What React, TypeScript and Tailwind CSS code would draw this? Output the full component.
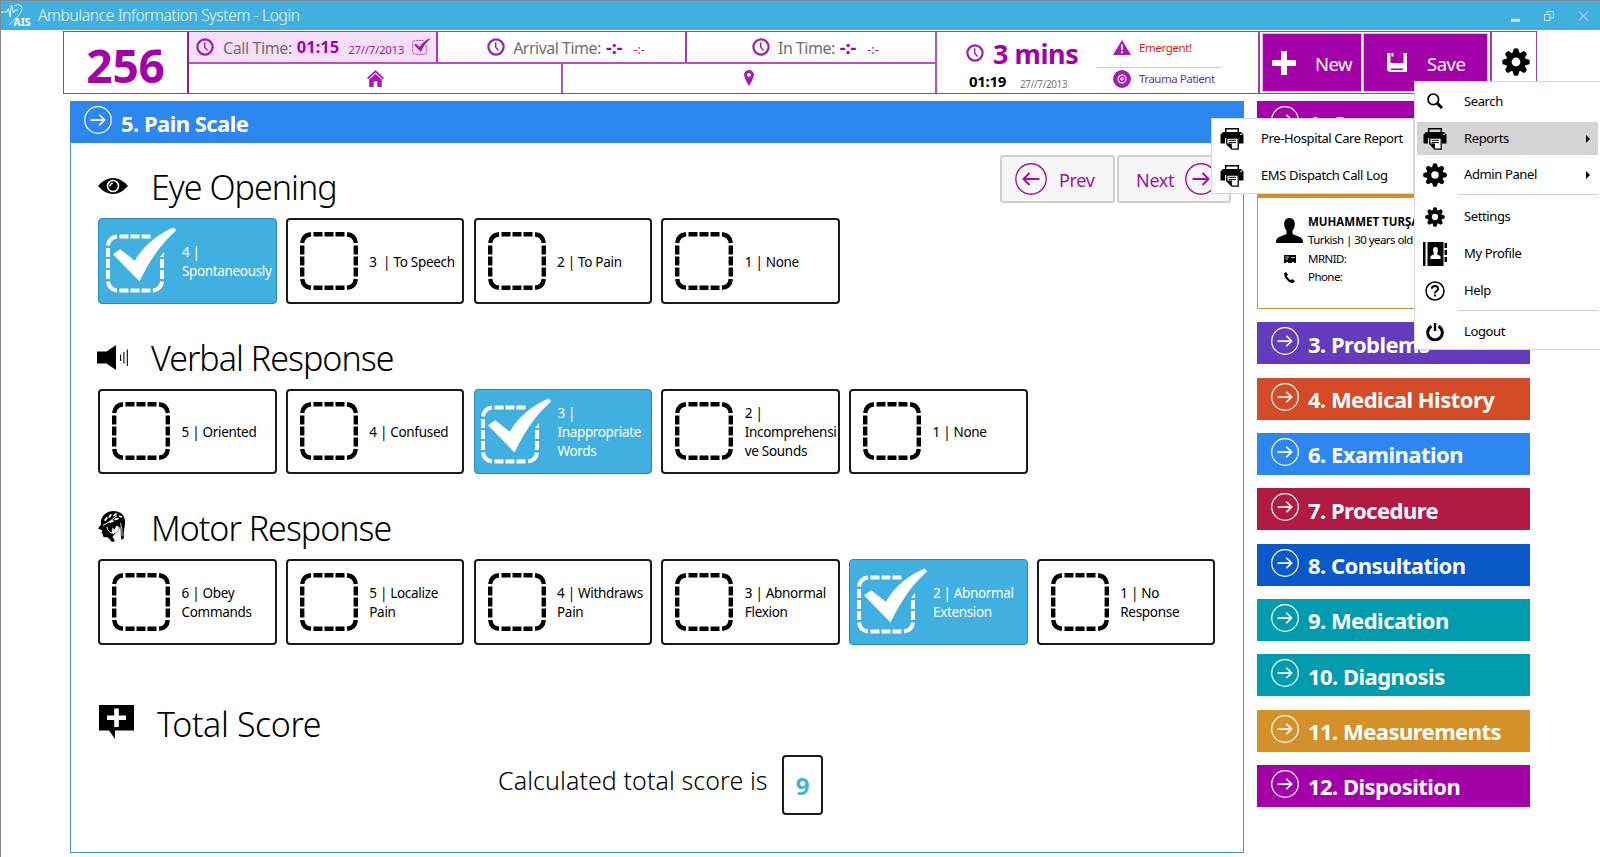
import React from "react";

const SECTION_COLORS = {
  purple: "bg-[#a400aa]",
  violet: "bg-[#633cbd]",
  orange: "bg-[#d44b27]",
  blue: "bg-[#2d87ef]",
  crimson: "bg-[#b11a41]",
  navy: "bg-[#0a59c9]",
  teal: "bg-[#009bad]",
  amber: "bg-[#d49129]",
};

type IconProps = { className?: string };

function ArrowCircle({ className = "", left = false }: IconProps & { left?: boolean }) {
  return (
    <svg viewBox="0 0 32 32" className={className} fill="none" stroke="currentColor">
      <circle cx="16" cy="16" r="15.2" strokeWidth="1.4" />
      <path
        strokeWidth="2"
        d={left ? "M24.5 16H8.5M14.5 10L8.5 16L14.5 22" : "M7.5 16H23.5M17.5 10L23.5 16L17.5 22"}
      />
    </svg>
  );
}

function Clock({ className = "" }: IconProps) {
  return (
    <svg viewBox="0 0 18 18" className={className} fill="none" stroke="currentColor">
      <circle cx="9" cy="9" r="7.6" strokeWidth="2.2" />
      <path d="M8.7 4.2V9.3L11.6 12.4" strokeWidth="1.4" />
    </svg>
  );
}

function Gear({ className = "" }: IconProps) {
  return (
    <svg viewBox="-14 -14 28 28" className={className} fill="currentColor">
      <path
        fillRule="evenodd"
        d="M0-10A10 10 0 1 1 0 10A10 10 0 1 1 0-10ZM0-4.4A4.4 4.4 0 1 0 0 4.4A4.4 4.4 0 1 0 0-4.4Z"
      />
      {[0, 45, 90, 135, 180, 225, 270, 315].map((a) => (
        <path key={a} transform={`rotate(${a})`} d="M-3.4-9L-2.2-13.2Q0-14.4 2.2-13.2L3.4-9Z" />
      ))}
    </svg>
  );
}

function Printer({ className = "" }: IconProps) {
  return (
    <svg viewBox="0 0 24 22" className={className}>
      <path d="M5.7 4.5V.8H18.3V4.5" fill="none" stroke="#000" strokeWidth="1.5" />
      <path d="M3 4H21L23.5 6.5V15.5H19V10H5V15.5H0.5V6.5Z" fill="#000" />
      <rect x="20.3" y="5.6" width="1.6" height="1.3" fill="#fff" />
      <path d="M6.8 10H18.2V21.2H12L6.8 16Z" fill="#fff" stroke="#000" strokeWidth="1.3" />
      <path d="M6.5 15.5H11.8V21.2Z" fill="#000" />
      <path d="M8.6 12.3H16M8.6 14.6H16" stroke="#000" strokeWidth="1" />
    </svg>
  );
}

function Eye() {
  return (
    <svg viewBox="0 0 30 16" className="mb-[2px] h-4 w-[30px]">
      <path d="M0 8Q7 0 15 0T30 8Q23 16 15 16T0 8Z" fill="#000" />
      <circle cx="15" cy="8" r="6.3" fill="#fff" />
      <circle cx="15" cy="8" r="4.7" fill="#000" />
      <path d="M12 8.500A3 3 0 0 1 14.800 5.200" fill="none" stroke="#fff" strokeWidth="1.400" />
    </svg>
  );
}

function Speaker() {
  return (
    <svg viewBox="0 0 31 25" className="-ml-px mb-px h-[25px] w-[31px]">
      <path d="M0 6.5H9.5L19 0V25L9.5 18.5H0Z" fill="#000" />
      <path d="M23.6 9.5V16M26.9 7V18.5M30.3 4.5V21" stroke="#000" strokeWidth="1.1" />
    </svg>
  );
}

function Head() {
  return (
    <svg viewBox="0 0 28 31" className="mb-[3px] h-[31px] w-7">
      <path
        d="M3 9C5 3 10 0 15.5 0C22 0 26.5 3.500 27 10C27.300 16 25 20 26 27L23.500 29C22 24 23.500 19 22 15C21 20 19 22 17 22.500L14.500 26L17 30L14 31L10 26.500L5.500 26L4.500 23L3.500 21.500L4.500 19.500L0 17.500L3 13.500Z"
        fill="#000"
      />
      <g fill="#fff">
        <ellipse cx="8" cy="8" rx="2.300" ry="1" transform="rotate(-48 8 8)" />
        <ellipse cx="12" cy="5" rx="2.300" ry="1" transform="rotate(-55 12 5)" />
        <ellipse cx="17" cy="3.800" rx="2.300" ry="1" transform="rotate(-40 17 3.800)" />
        <ellipse cx="13.500" cy="10.500" rx="2.500" ry="1" transform="rotate(-18 13.500 10.500)" />
        <ellipse cx="18.500" cy="8" rx="2.500" ry="1" transform="rotate(-15 18.500 8)" />
        <ellipse cx="22.500" cy="5.500" rx="2" ry=".9" transform="rotate(20 22.500 5.500)" />
      </g>
      <path d="M5 14.500Q12 11 19 4.500M9 16Q10 22 16 22.500" fill="none" stroke="#fff" strokeWidth="1" />
      <path d="M13.500 22L14.500 16.500L16.500 18.500L18.500 14.500L21 16Q21 20 17.500 22Z" fill="#fff" />
      <path d="M22.500 12Q24.500 18 24 25" fill="none" stroke="#fff" strokeWidth=".8" />
    </svg>
  );
}

function ScoreBubble() {
  return (
    <svg viewBox="0 0 35 34" className="mb-[3px] ml-px h-[34px] w-[35px]">
      <path d="M0 0H35V25.500H16V34L10 25.500H0Z" fill="#000" />
      <path d="M8 12.700H27M17.500 3.500V22" stroke="#fff" strokeWidth="4.600" />
    </svg>
  );
}

function EmptyBox() {
  return (
    <svg viewBox="0 0 58 58" className="size-[58px]" fill="none" stroke="currentColor" strokeWidth="4.400">
      <path d="M2.200 11Q3 3 11 2.200M47 2.200Q55 3 55.800 11M55.800 47Q55 55 47 55.800M11 55.800Q3 55 2.200 47" />
      <path d="M13.500 2.200h9M24.500 2.200h9M35.500 2.200h9M13.500 55.800h9M24.500 55.800h9M35.500 55.800h9" />
      <path d="M2.200 13.500v9M2.200 24.500v9M2.200 35.500v9M55.800 13.500v9M55.800 24.500v9M55.800 35.500v9" />
    </svg>
  );
}

function CheckedBox({ className = "" }: IconProps) {
  return (
    <svg viewBox="0 0 72 66" className={className} fill="none" stroke="currentColor" strokeWidth="4">
      <g transform="translate(0 7.500)">
        <path d="M2 11Q3 3 11 2M56 47Q55 55 47 56M11 56Q3 55 2 47" />
        <path d="M13.500 2h9M24.500 2h9M35.500 2h9M13.500 56h9M24.500 56h9M35.500 56h9" />
        <path d="M2 13.500v9M2 24.500v9M2 35.500v9M56 24.500v9M56 35.500v9" />
        <path d="M54 22.500L58 17.500V22.500Z" fill="currentColor" stroke="none" />
      </g>
      <path
        d="M7 27.200L14.300 22.200L28.800 33.800C38 18 52 7 67.500 .5L70.300 3.200C55 17 45 31 33.500 54.500Z"
        fill="currentColor"
        stroke="none"
      />
    </svg>
  );
}

function Logo() {
  return (
    <svg viewBox="0 0 30 26" className="h-[26px] w-[30px]">
      <path
        d="M0 9H6L7.500 5L9 14L10.500 2L12.500 10L14 7H17M13 3Q17 0 20.500 3Q22 8 17 13L8 22"
        fill="none"
        stroke="#d9f2fb"
        strokeWidth="1"
      />
      <text x="12.500" y="22.500" fontSize="10.500" fontWeight="700" fill="#fff" fontFamily="Noto Sans, sans-serif" textLength="17">
        AIS
      </text>
    </svg>
  );
}

type Option = { label: string; checked?: boolean };

function OptionCard({ label, checked }: Option) {
  return (
    <div
      className={
        checked
          ? "flex h-[85.500px] w-[178.500px] items-center rounded-[4px] border border-[#1e8bb8] bg-[#41b0e1] pl-[6.500px] text-white"
          : "flex h-[85.500px] w-[178.500px] items-center rounded-[4px] border-2 border-[#1a1a1a] bg-white pl-[12px] text-black"
      }
    >
      {checked ? <CheckedBox className="mb-px h-[66px] w-[72px] shrink-0" /> : <span className="shrink-0"><EmptyBox /></span>}
      <span
        className={
          checked
            ? "ml-[4.500px] w-[96px] pt-[3px] text-[13.500px] leading-[19px] tracking-[-0.350px] break-words"
            : "ml-[11.500px] w-[93px] pt-[3px] text-[13.500px] leading-[19px] tracking-[-0.300px] whitespace-pre-wrap"
        }
      >
        {label}
      </span>
    </div>
  );
}

function Group({ icon, title, options, first }: { icon: React.ReactNode; title: string; options: Option[]; first?: boolean }) {
  return (
    <section>
      <div className={first ? "flex h-[75px] items-end justify-between" : "flex h-[85px] items-end"}>
        <div className="mb-[11px] flex h-10 items-center">
          <span className="flex w-[53px] items-center">{icon}</span>
          <h2 className="text-[34px] leading-[40px] font-light tracking-[-0.980px]">{title}</h2>
        </div>
        {first && (
          <div className="mr-[12px] mb-[15px] flex gap-[2px] text-[18px] text-[#a010a8]">
            <button className="flex h-[48px] w-[115px] items-center gap-[12px] rounded-[3px] border-2 border-[#d0d0d0] bg-[#f6f6f6] pl-[13px]">
              <ArrowCircle left className="size-8" />
              <span className="pt-[3px] tracking-[-0.300px]">Prev</span>
            </button>
            <button className="flex h-[48px] w-[114px] items-center gap-[11px] rounded-[3px] border-2 border-[#d0d0d0] bg-[#f6f6f6] pl-[17px]">
              <span className="pt-[3px] tracking-[-0.300px]">Next</span>
              <ArrowCircle className="size-8" />
            </button>
          </div>
        )}
      </div>
      <div className="flex gap-[9.250px]">
        {options.map((o) => (
          <OptionCard key={o.label} {...o} />
        ))}
      </div>
    </section>
  );
}

function Bar({ color, title }: { color: string; title: string }) {
  return (
    <div className={`flex h-[42px] items-center pl-[14px] text-white ${color}`}>
      <ArrowCircle className="mb-[4px] size-7" />
      <span className="ml-[9px] pt-px text-[22px] leading-[30px] font-bold tracking-[-0.530px] whitespace-nowrap">{title}</span>
    </div>
  );
}

function TimeCell({ label, active }: { label: string; active?: boolean }) {
  return (
    <div
      className={
        active
          ? "flex w-[250px] items-center border-r-2 border-[#a53aad] bg-[#f7dff9] pl-[7px] text-[#a020ae]"
          : "flex w-[249px] items-center justify-center border-r-2 border-[#a53aad] pl-[9px] text-[#a020ae] last:border-r-0"
      }
    >
      <Clock className="size-[18px]" />
      <span className={active ? "ml-[9px] pt-px text-[16px] tracking-[-0.400px] text-[#6f6f6f]" : "ml-[8px] pt-px text-[16px] tracking-[-0.500px] text-[#6f6f6f]"}>
        {label}
      </span>
      {active ? (
        <b className="ml-[5px] pt-px text-[16.500px] text-[#a400aa]">01:15</b>
      ) : (
        <b className="ml-[5px] pt-px text-[18px] text-[#a400aa]">-:-</b>
      )}
      <span className={active ? "ml-[9px] pt-[6px] text-[11.500px] tracking-[-0.300px]" : "ml-[11px] pt-[6px] text-[12.500px]"}>
        {active ? "27//7/2013" : "-:-"}
      </span>
      {active && <CheckedBox className="mb-px ml-[8px] h-[17px] w-[19px] [stroke-width:3]" />}
    </div>
  );
}

function MenuItem({ icon, label, arrow, active, tall }: { icon: React.ReactNode; label: string; arrow?: boolean; active?: boolean; tall?: boolean }) {
  return (
    <div className={`flex items-center pl-[6px] ${tall ? "h-[37px]" : "h-[33px]"} ${active ? "bg-[#d5d3d4]" : ""}`}>
      <span className="flex w-6 justify-center">{icon}</span>
      <span className="ml-[17px] pt-px text-[13px] tracking-[-0.380px] whitespace-nowrap">{label}</span>
      {arrow && <span className="mr-[8px] ml-auto border-y-[4px] border-l-[4px] border-y-transparent border-l-black" />}
    </div>
  );
}

const EYE: Option[] = [
  { label: "4 | Spontaneously", checked: true },
  { label: "3  | To Speech" },
  { label: "2 | To Pain" },
  { label: "1 | None" },
];
const VERBAL: Option[] = [
  { label: "5 | Oriented" },
  { label: "4 | Confused" },
  { label: "3 | Inappropriate Words", checked: true },
  { label: "2 | Incomprehensi\nve Sounds" },
  { label: "1 | None" },
];
const MOTOR: Option[] = [
  { label: "6 | Obey Commands" },
  { label: "5 | Localize Pain" },
  { label: "4 | Withdraws Pain" },
  { label: "3 | Abnormal Flexion" },
  { label: "2 | Abnormal Extension", checked: true },
  { label: "1 | No Response" },
];

export default function App() {
  return (
    <div className="relative h-[857px] w-[1600px] overflow-hidden border-t border-l border-[#7d8a90] bg-white font-['Noto_Sans','Open_Sans',sans-serif] text-black">
      <div className="flex h-[29px] items-center bg-[#41b0e1] text-[#eefaff]">
        <Logo />
        <span className="ml-[7px] text-[15.500px] font-light tracking-[-0.330px]">Ambulance Information System - Login</span>
        <svg viewBox="0 0 78 14" className="mr-[11px] ml-auto h-[14px] w-[78px]" fill="none" stroke="#c5e8f6">
          <path d="M0 11.200h9" strokeWidth="3" />
          <path d="M33.500 5.500h5.500v6h-5.500zM36 5V2.500h6.500V9H39.500" />
          <path d="M68 2.500l9 9M77 2.500l-9 9" />
        </svg>
      </div>

      <header className="mt-px ml-[62px] flex h-[63px] w-[1474px] border border-[#a53aad]">
        <div className="flex w-[125px] items-center justify-center border-r-2 border-[#8f1f97] pt-[5px] text-[46px] leading-none font-bold tracking-[-0.200px] text-[#a400aa]">256</div>
        <div className="flex w-[748px] flex-col border-r-2 border-[#b552bc]">
          <div className="flex h-[32px] border-b-2 border-[#b552bc]">
            <TimeCell label="Call Time:" active />
            <TimeCell label="Arrival Time:" />
            <TimeCell label="In Time:" />
          </div>
          <div className="flex flex-1 text-[#a41bb8]">
            <div className="flex w-[374px] items-center justify-center border-r-2 border-[#b552bc]">
              <svg viewBox="0 0 17 17" className="size-[17px]" fill="currentColor">
                <path d="M8.500 0L17 8L15.800 9.300L8.500 2.600L1.200 9.300L0 8Z" />
                <path d="M8.500 3.700L14.800 9.400V17H10.300V11.500H6.700V17H2.200V9.400Z" />
              </svg>
            </div>
            <div className="flex flex-1 items-center justify-center pb-px">
              <svg viewBox="0 0 10 16" className="h-4 w-[10px]" fill="currentColor">
                <path fillRule="evenodd" d="M5 0A5 5 0 0 1 10 5Q9.500 8.500 5 16Q.5 8.500 0 5A5 5 0 0 1 5 0ZM5 3A1.900 1.900 0 1 0 5 6.800A1.900 1.900 0 1 0 5 3Z" />
              </svg>
            </div>
          </div>
        </div>
        <div className="flex w-[323px] border-r-2 border-[#a53aad] pl-[29px] text-[#a41bb8]">
          <div className="w-[131px]">
            <div className="flex h-[41px] items-center">
              <Clock className="size-[18px]" />
              <b className="ml-[9px] pt-[2px] text-[27px] leading-none tracking-[-0.450px] whitespace-nowrap text-[#a400aa]">3 mins</b>
            </div>
            <div className="flex h-[16px] items-center pl-[3px]">
              <b className="text-[15px] leading-none tracking-[-0.300px] text-black">01:19</b>
              <span className="ml-[14px] pt-[5px] text-[10px] leading-none tracking-[-0.400px] text-[#777]">27//7/2013</span>
            </div>
          </div>
          <div className="w-[124px] text-[12px]">
            <div className="flex h-[36px] items-center border-b border-[#ccc] pl-[16px]">
              <svg viewBox="0 0 18 15" className="mb-[4px] h-[15px] w-[18px]">
                <path d="M9 0L18 15H0Z" fill="currentColor" />
                <path d="M9 4.500V10M9 11.300V13.300" stroke="#fff" strokeWidth="1.800" />
              </svg>
              <span className="ml-[8px] pb-[3px] text-[11.500px] tracking-[-0.400px] text-[#e01515]">Emergent!</span>
            </div>
            <div className="flex h-[21px] items-center pl-[16px]">
              <svg viewBox="0 0 18 18" className="size-[18px]">
                <circle cx="9" cy="9" r="9" fill="currentColor" />
                <circle cx="9" cy="9" r="3.900" fill="none" stroke="#fff" strokeWidth="1.100" />
                <circle cx="9" cy="9" r="1.300" fill="none" stroke="#fff" strokeWidth="1" />
              </svg>
              <span className="ml-[8px] text-[11.500px] tracking-[-0.480px] whitespace-nowrap text-[#6236b4]">Trauma Patient</span>
            </div>
          </div>
        </div>
        <div className="flex w-[232px] gap-[3px] border-r-2 border-[#a53aad] px-[3px] py-[2px] text-[19px] text-white">
          <button className="flex w-[98px] items-center bg-[#a400aa] pl-[9px] outline outline-[#e5b5e8]">
            <svg viewBox="0 0 24 24" className="size-6">
              <path d="M0 12H24M12 0V24" stroke="#fff" strokeWidth="6" />
            </svg>
            <span className="ml-[19px] pt-[2px] text-[18.500px] tracking-[-0.600px]">New</span>
          </button>
          <button className="flex w-[123px] items-center bg-[#a400aa] pl-[23px] outline outline-[#e5b5e8]">
            <svg viewBox="0 0 20 19" className="h-[19px] w-5">
              <path d="M0 0H3.500V10H16.500V0H20V19H2L0 17ZM4.500 0H6.500V3.500H4.500ZM4 15.500V17H16V15.500Z" fill="#fff" fillRule="evenodd" />
            </svg>
            <span className="ml-[20px] pt-[2px] text-[18.500px] tracking-[-0.500px]">Save</span>
          </button>
        </div>
        <div className="flex flex-1 items-center justify-center pb-px pl-[3px]">
          <Gear className="size-7" />
        </div>
      </header>

      <div className="mt-[7px] ml-[69px] flex gap-[13px]">
        <main className="h-[752px] w-[1174px] border border-[#4a8fd0]">
          <div className="-mx-px -mt-px">
            <Bar color={SECTION_COLORS.blue} title="5. Pain Scale" />
          </div>
          <div className="pl-[27px]">
            <Group first icon={<Eye />} title="Eye Opening" options={EYE} />
            <Group icon={<Speaker />} title="Verbal Response" options={VERBAL} />
            <Group icon={<Head />} title="Motor Response" options={MOTOR} />
            <div className="mt-[59px] flex h-10 items-center">
              <span className="w-[59px]"><ScoreBubble /></span>
              <h2 className="text-[34px] leading-[40px] font-light tracking-[-0.400px]">Total Score</h2>
            </div>
            <div className="mt-[11px] flex items-center pl-[400px]">
              <span className="w-[284px] pb-[9px] text-[25px] leading-[36px] font-light tracking-[0.080px] whitespace-nowrap">Calculated total score is</span>
              <span className="flex h-[60px] w-[41px] items-center justify-center rounded-[4px] border-2 border-[#1a1a1a] pt-[3px] text-[24px] font-bold text-[#4aaedb]">9</span>
            </div>
          </div>
        </main>

        <aside className="flex w-[273px] flex-col gap-[13.340px]">
          <Bar color={SECTION_COLORS.purple} title="1. Case" />
          <div className="h-[152.600px] border border-[#d49129]">
            <div className="-mx-px -mt-px">
              <Bar color={SECTION_COLORS.amber} title="" />
            </div>
            <div className="grid grid-cols-[27px_1fr] items-center gap-x-[5px] pt-[14px] pl-[18px] text-[12px] whitespace-nowrap">
              <svg viewBox="0 0 27 25" className="row-span-2 h-[25px] w-[27px]">
                <path d="M13.500 0C17.500 0 19 3 18.800 6.500C18.700 9 18 11 16.500 12.500V16L25 19.500Q27 21 27 25H0Q0 21 2 19.500L10.500 16V12.500C9 11 8.300 9 8.200 6.500C8 3 9.500 0 13.500 0Z" />
              </svg>
              <b className="h-[18.500px] text-[11.500px] leading-[20px]">MUHAMMET TURŞAK</b>
              <span className="h-[18.500px] text-[11.500px] leading-[18px] tracking-[-0.550px]">Turkish | 30 years old</span>
              <svg viewBox="0 0 12 8" className="h-2 w-3 justify-self-center">
                <path d="M0 0H12V8H10V7H8V8H4V7H2V8H0Z" />
                <path d="M1.500 2H5M1.500 4H4M7 2.500H10.500" stroke="#fff" strokeWidth=".8" />
              </svg>
              <span className="h-[18.500px] text-[11.500px] leading-[19px] tracking-[-0.550px]">MRNID:</span>
              <svg viewBox="0 0 11 11" className="size-[11px] justify-self-center">
                <path d="M2 0L4 2.800L2.800 4.300Q4.500 7 6.800 8.200L8.200 7L11 9L9.500 11Q6 11.500 3 8T0 1.500Z" />
              </svg>
              <span className="h-[18.500px] text-[11.500px] leading-[18px] tracking-[-0.550px]">Phone:</span>
            </div>
          </div>
          <Bar color={SECTION_COLORS.violet} title="3. Problems" />
          <Bar color={SECTION_COLORS.orange} title="4. Medical History" />
          <Bar color={SECTION_COLORS.blue} title="6. Examination" />
          <Bar color={SECTION_COLORS.crimson} title="7. Procedure" />
          <Bar color={SECTION_COLORS.navy} title="8. Consultation" />
          <Bar color={SECTION_COLORS.teal} title="9. Medication" />
          <Bar color={SECTION_COLORS.teal} title="10. Diagnosis" />
          <Bar color={SECTION_COLORS.amber} title="11. Measurements" />
          <Bar color={SECTION_COLORS.purple} title="12. Disposition" />
        </aside>
      </div>

      <div className="absolute top-[117px] left-[1210px] h-[76px] w-[203px] border border-[#d8d8d8] bg-white pt-px pl-[2px]">
        <MenuItem tall icon={<Printer className="h-[22px] w-6" />} label="Pre-Hospital Care Report" />
        <MenuItem tall icon={<Printer className="h-[22px] w-6" />} label="EMS Dispatch Call Log" />
      </div>

      <div className="absolute top-[80px] left-[1413px] h-[269px] w-[190px] border border-[#d8d8d8] bg-white pt-px pr-[5px] pl-[2px]">
        <MenuItem
          tall
          icon={
            <svg viewBox="0 0 16 16" className="mb-[2px] size-4" fill="none" stroke="#000">
              <circle cx="6.300" cy="6.300" r="5.300" strokeWidth="1.700" />
              <path d="M10 10L15 15" strokeWidth="3" />
            </svg>
          }
          label="Search"
        />
        <div className="h-[2px]" />
        <MenuItem active arrow icon={<Printer className="h-[22px] w-6" />} label="Reports" />
        <div className="h-px" />
        <MenuItem tall arrow icon={<Gear className="size-6" />} label="Admin Panel" />
        <div className="mt-px ml-[41px] h-px bg-[#d0d0d0]" />
        <div className="h-[3px]" />
        <MenuItem tall icon={<Gear className="size-5" />} label="Settings" />
        <MenuItem
          tall
          icon={
            <svg viewBox="0 0 24 24" className="size-6">
              <path d="M0 0H2.500V24H0ZM4.500 0H20.500V24H4.500ZM21.500 1H24V6H21.500ZM21.500 8H24V13H21.500ZM21.500 15H24V20H21.500Z" />
              <path d="M12.500 5C15 5 15.500 8 14.300 10.800V12.500L17.500 14V17H7.500V14L10.700 12.500V10.800C9.500 8 10 5 12.500 5Z" fill="#fff" />
            </svg>
          }
          label="My Profile"
        />
        <MenuItem
          tall
          icon={
            <svg viewBox="0 0 20 20" className="size-5" fill="none" stroke="#000">
              <circle cx="10" cy="10" r="9" strokeWidth="1.500" />
              <path d="M6.800 7.800Q7 5 10 5T13.200 7.700Q13.200 9 11.500 10T10 12.300M10 13.500V15.500" strokeWidth="2" />
            </svg>
          }
          label="Help"
        />
        <div className="mt-px ml-[41px] h-px bg-[#d0d0d0]" />
        <div className="h-[2px]" />
        <MenuItem
          tall
          icon={
            <svg viewBox="0 0 18 18" className="size-[18px]" fill="none" stroke="#000">
              <path d="M5.500 3.200A7.300 7.300 0 1 0 12.500 3.200" strokeWidth="3" />
              <path d="M9 0V8" strokeWidth="2.400" />
            </svg>
          }
          label="Logout"
        />
      </div>
    </div>
  );
}
